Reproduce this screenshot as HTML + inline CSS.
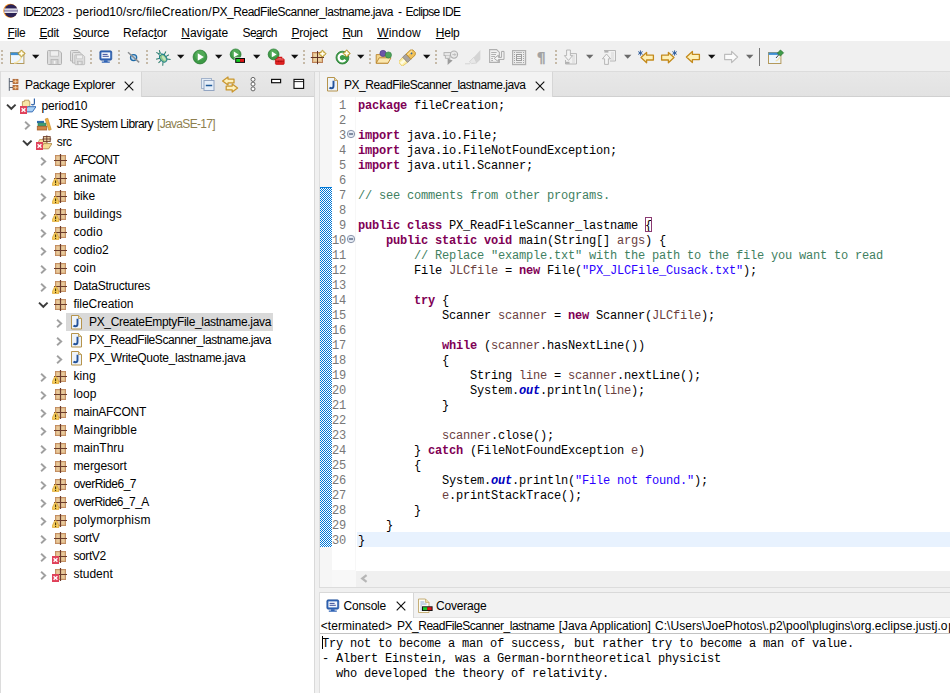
<!DOCTYPE html>
<html lang="en"><head><meta charset="utf-8"><title>IDE2023 - Eclipse IDE</title>
<style>
html,body{margin:0;padding:0}
body{width:950px;height:693px;position:relative;overflow:hidden;background:#fff;font-family:'Liberation Sans', sans-serif;font-size:12px;color:#000}
body>div,body>svg,body>span,body>pre{position:absolute;display:block}
body>span{white-space:pre;line-height:16px;height:16px}
pre{margin:0;font-family:'Liberation Mono', monospace;font-size:12px;line-height:15px;letter-spacing:-0.2012px}
.k{color:#7f0055;font-weight:bold} .s{color:#2a00ff} .c{color:#3f7f5f} .v{color:#6a3e3e} .f{color:#0000c0;font-weight:bold;font-style:italic}
u{text-decoration:underline;text-underline-offset:1px}
</style></head>
<body>
<div style="left:0px;top:41px;width:950px;height:31px;background:#f0f0f0;"></div>
<div style="left:0px;top:71px;width:950px;height:1px;background:#dcdcdc;"></div>
<div style="left:0px;top:72px;width:315px;height:621px;background:#fff;"></div>
<div style="left:0px;top:72px;width:314px;height:25px;background:linear-gradient(#e8e8e8,#e2e2e2);"></div>
<div style="left:0px;top:96px;width:314px;height:1px;background:#d0d0d0;"></div>
<div style="left:1px;top:71px;width:140px;height:26px;background:#f3f3f3;"></div>
<div style="left:1px;top:71px;width:140px;height:1px;background:#e2e2e2;"></div>
<div style="left:141px;top:72px;width:1px;height:25px;background:#d6d6d6;"></div>
<div style="left:0px;top:72px;width:1px;height:621px;background:#dcdcdc;"></div>
<div style="left:314px;top:72px;width:1px;height:621px;background:#d9d9d9;"></div>
<div style="left:315px;top:72px;width:4px;height:621px;background:#f0f0f0;"></div>
<div style="left:319px;top:72px;width:631px;height:515px;background:#fff;"></div>
<div style="left:319px;top:72px;width:631px;height:25px;background:linear-gradient(#e8e8e8,#e2e2e2);"></div>
<div style="left:319px;top:96px;width:631px;height:1px;background:#d0d0d0;"></div>
<div style="left:320px;top:71px;width:232px;height:26px;background:#f3f3f3;"></div>
<div style="left:320px;top:71px;width:232px;height:1px;background:#e2e2e2;"></div>
<div style="left:552px;top:72px;width:1px;height:25px;background:#d6d6d6;"></div>
<div style="left:319px;top:72px;width:1px;height:515px;background:#dedede;"></div>
<div style="left:320px;top:97px;width:12px;height:490px;background:#f6f6f6;"></div>
<div style="left:332px;top:570px;width:24px;height:17px;background:#f8f8f8;"></div>
<div style="left:356px;top:571px;width:594px;height:16px;background:#f0f0f0;"></div>
<div style="left:355px;top:97px;width:1px;height:473px;background:#f7f7f7;"></div>
<div style="left:319px;top:587px;width:631px;height:1px;background:#dcdcdc;"></div>
<div style="left:319px;top:588px;width:631px;height:4px;background:#f0f0f0;"></div>
<div style="left:320px;top:187px;width:12px;height:360px;background:#fff;background-image:conic-gradient(#0078d7 25%,#fff 0 50%,#0078d7 0 75%,#fff 0);background-size:2px 2px"></div>
<div style="left:320px;top:187px;width:12px;height:1px;background:#0078d7;"></div>
<div style="left:357px;top:532px;width:593px;height:15px;background:#e8f2fe;"></div>
<div style="left:319px;top:592px;width:631px;height:101px;background:#fff;"></div>
<div style="left:319px;top:592px;width:631px;height:26px;background:#f2f2f2;"></div>
<div style="left:319px;top:617px;width:631px;height:1px;background:#e4e4e4;"></div>
<div style="left:319px;top:592px;width:631px;height:1px;background:#d9d9d9;"></div>
<div style="left:320px;top:593px;width:93px;height:25px;background:#fff;"></div>
<div style="left:413px;top:593px;width:1px;height:25px;background:#d6d6d6;"></div>
<div style="left:319px;top:592px;width:1px;height:101px;background:#dedede;"></div>
<div style="left:320px;top:633px;width:630px;height:1px;background:#c2c2c2;"></div>
<span style="left:23px;top:4px;font-size:12px;letter-spacing:-0.900px;">IDE2023</span>
<span style="left:67.8px;top:4px;font-size:12px;letter-spacing:-0.200px;">-</span>
<span style="left:75.8px;top:4px;font-size:12px;letter-spacing:0.033px;">period10/src/</span>
<span style="left:145.9px;top:4px;font-size:12px;letter-spacing:0.136px;">fileCreation/</span>
<span style="left:212px;top:4px;font-size:12px;letter-spacing:-0.473px;">PX_ReadFileScanner_lastname.java</span>
<span style="left:398px;top:4px;font-size:12px;letter-spacing:-0.200px;">-</span>
<span style="left:405.5px;top:4px;font-size:12px;letter-spacing:-0.648px;">Eclipse IDE</span>
<span style="left:7.6px;top:24.5px;font-size:12px;letter-spacing:-0.440px;"><u>F</u>ile</span>
<span style="left:39.4px;top:24.5px;font-size:12px;letter-spacing:-0.326px;"><u>E</u>dit</span>
<span style="left:73px;top:24.5px;font-size:12px;letter-spacing:-0.308px;"><u>S</u>ource</span>
<span style="left:123px;top:24.5px;font-size:12px;letter-spacing:-0.147px;">Refac<u>t</u>or</span>
<span style="left:181.3px;top:24.5px;font-size:12px;letter-spacing:-0.059px;"><u>N</u>avigate</span>
<span style="left:242.6px;top:24.5px;font-size:12px;letter-spacing:-0.624px;">Se<u>a</u>rch</span>
<span style="left:291.4px;top:24.5px;font-size:12px;letter-spacing:-0.151px;"><u>P</u>roject</span>
<span style="left:342.4px;top:24.5px;font-size:12px;letter-spacing:-0.744px;"><u>R</u>un</span>
<span style="left:377.2px;top:24.5px;font-size:12px;letter-spacing:0.169px;"><u>W</u>indow</span>
<span style="left:435.8px;top:24.5px;font-size:12px;letter-spacing:-0.247px;"><u>H</u>elp</span>
<span style="left:25px;top:77px;font-size:12px;letter-spacing:-0.295px;">Package Explorer</span>
<span style="left:344px;top:77px;font-size:12px;letter-spacing:-0.457px;">PX_ReadFileScanner_lastname.java</span>
<span style="left:343.5px;top:597.5px;font-size:12px;letter-spacing:-0.219px;">Console</span>
<span style="left:436px;top:597.5px;font-size:12px;letter-spacing:-0.191px;">Coverage</span>
<span style="left:320.8px;top:618px;font-size:12px;letter-spacing:0.040px;">&lt;terminated&gt;</span>
<span style="left:397px;top:618px;font-size:12px;letter-spacing:-0.491px;">PX_ReadFileScanner_lastname</span>
<span style="left:558.8px;top:618px;font-size:12px;letter-spacing:-0.078px;">[Java Application]</span>
<span style="left:655px;top:618px;font-size:12px;letter-spacing:0.043px;">C:\Users\JoePhotos\.p2\pool\plugins\org.eclipse.justj.o</span>
<span style="left:948.2px;top:618px;font-size:12px;">penjdk.hotspot.jre.full</span>
<div style="left:66px;top:313px;width:207px;height:18px;background:#d9d9d9;"></div>
<span style="left:41.4px;top:98px;font-size:12px;letter-spacing:-0.090px;">period10</span>
<span style="left:56.8px;top:116px;font-size:12px;letter-spacing:-0.546px;">JRE System Library</span>
<span style="left:157px;top:116px;font-size:12px;letter-spacing:-0.670px;color:#8e7f4f;">[JavaSE-17]</span>
<span style="left:56.8px;top:134px;font-size:12px;letter-spacing:-0.367px;">src</span>
<span style="left:73.4px;top:152px;font-size:12px;letter-spacing:-0.624px;">AFCONT</span>
<span style="left:73.4px;top:170px;font-size:12px;letter-spacing:-0.015px;">animate</span>
<span style="left:73.4px;top:188px;font-size:12px;letter-spacing:-0.054px;">bike</span>
<span style="left:73.4px;top:206px;font-size:12px;letter-spacing:0.136px;">buildings</span>
<span style="left:73.4px;top:224px;font-size:12px;letter-spacing:0.122px;">codio</span>
<span style="left:73.4px;top:242px;font-size:12px;letter-spacing:0.004px;">codio2</span>
<span style="left:73.4px;top:260px;font-size:12px;letter-spacing:0.146px;">coin</span>
<span style="left:73.4px;top:278px;font-size:12px;letter-spacing:-0.246px;">DataStructures</span>
<span style="left:73.4px;top:296px;font-size:12px;letter-spacing:-0.050px;">fileCreation</span>
<span style="left:89px;top:314px;font-size:12px;letter-spacing:-0.336px;">PX_CreateEmptyFile_lastname.java</span>
<span style="left:89px;top:332px;font-size:12px;letter-spacing:-0.441px;">PX_ReadFileScanner_lastname.java</span>
<span style="left:89px;top:350px;font-size:12px;letter-spacing:-0.273px;">PX_WriteQuote_lastname.java</span>
<span style="left:73.4px;top:368px;font-size:12px;letter-spacing:0.071px;">king</span>
<span style="left:73.4px;top:386px;font-size:12px;letter-spacing:0.153px;">loop</span>
<span style="left:73.4px;top:404px;font-size:12px;letter-spacing:-0.274px;">mainAFCONT</span>
<span style="left:73.4px;top:422px;font-size:12px;letter-spacing:0.141px;">Maingribble</span>
<span style="left:73.4px;top:440px;font-size:12px;letter-spacing:-0.011px;">mainThru</span>
<span style="left:73.4px;top:458px;font-size:12px;letter-spacing:-0.081px;">mergesort</span>
<span style="left:73.4px;top:476px;font-size:12px;letter-spacing:-0.495px;">overRide6_7</span>
<span style="left:73.4px;top:494px;font-size:12px;letter-spacing:-0.572px;">overRide6_7_A</span>
<span style="left:73.4px;top:512px;font-size:12px;letter-spacing:0.216px;">polymorphism</span>
<span style="left:73.4px;top:530px;font-size:12px;letter-spacing:-0.403px;">sortV</span>
<span style="left:73.4px;top:548px;font-size:12px;letter-spacing:-0.381px;">sortV2</span>
<span style="left:73.4px;top:566px;font-size:12px;letter-spacing:0.004px;">student</span>
<pre style="left:358px;top:99px"><span class="k">package</span> fileCreation;

<span class="k">import</span> java.io.File;
<span class="k">import</span> java.io.FileNotFoundException;
<span class="k">import</span> java.util.Scanner;

<span class="c">// see comments from other programs.</span>

<span class="k">public</span> <span class="k">class</span> PX_ReadFileScanner_lastname {
    <span class="k">public</span> <span class="k">static</span> <span class="k">void</span> main(String[] <span class="v">args</span>) {
        <span class="c">// Replace &quot;example.txt&quot; with the path to the file you want to read</span>
        File <span class="v">JLCfile</span> = <span class="k">new</span> File(<span class="s">&quot;PX_JLCFile_Cusack.txt&quot;</span>);

        <span class="k">try</span> {
            Scanner <span class="v">scanner</span> = <span class="k">new</span> Scanner(<span class="v">JLCfile</span>);

            <span class="k">while</span> (<span class="v">scanner</span>.hasNextLine())
            {
                String <span class="v">line</span> = <span class="v">scanner</span>.nextLine();
                System.<span class="f">out</span>.println(<span class="v">line</span>);
            }

            <span class="v">scanner</span>.close();
        } <span class="k">catch</span> (FileNotFoundException <span class="v">e</span>)
        {
            System.<span class="f">out</span>.println(<span class="s">&quot;File not found.&quot;</span>);
            <span class="v">e</span>.printStackTrace();
        }
    }
}</pre>
<pre style="left:325px;top:99px;width:21px;text-align:right;color:#787878">1
2
3
4
5
6
7
8
9
10
11
12
13
14
15
16
17
18
19
20
21
22
23
24
25
26
27
28
29
30</pre>
<div style="left:645px;top:217px;width:7px;height:15px;background:transparent;border:1px solid #8a3a72;box-sizing:border-box"></div>
<pre style="left:322px;top:637px">Try not to become a man of success, but rather try to become a man of value.
- Albert Einstein, was a German-borntheoretical physicist
  who developed the theory of relativity.</pre>
<div style="left:322px;top:636px;width:1px;height:13px;background:#000;"></div>
<svg style="left:359px;top:573px" width="10" height="11" viewBox="0 0 10 11"><path d="M7.6 2.2 L3.2 5.5 L7.6 8.8" fill="none" stroke="#b6b6b6" stroke-width="2.2"/></svg>
<svg style="left:20px;top:98px" width="16" height="16" viewBox="0 0 16 16"><path d="M2.4 3.6 H4.4 V2.2 H9 V3.6 H9.8 V8.8 H2.4 Z" fill="#f8e6a6" stroke="#b8965a" stroke-width=".9"/><path d="M4.2 13.9 L7.6 8.7 H16 L12.4 13.9 Z" fill="#a9d1f6" stroke="#3b6fb6" stroke-width="1"/><path d="M14.4 .6 V5.2 Q14.4 6.8 12.9 6.8 Q11.9 6.8 11.4 6.1" fill="none" stroke="#2f62a8" stroke-width="1.2"/><rect x="0" y="8" width="7" height="8" fill="#e0415a"/><path d="M1.6 10.2 L5.4 13.8 M5.4 10.2 L1.6 13.8" stroke="#fff" stroke-width="1.4"/></svg>
<svg style="left:6.3px;top:97px" width="11" height="18" viewBox="0 0 11 18"><path d="M1 7.6 L5.3 11.8 L9.6 7.6" fill="none" stroke="#3c3c3c" stroke-width="1.9"/></svg>
<svg style="left:36px;top:116px" width="16" height="16" viewBox="0 0 16 16"><g transform="translate(0,1.3)"><rect x="1" y="3.6" width="7" height="2.2" fill="#2d6cab"/><rect x="2" y="5.8" width="8" height="3" fill="#3f9f73" stroke="#2b7a57" stroke-width=".6"/><rect x="1.3" y="9" width="9.4" height="3.7" fill="#cf8646" stroke="#a55e2a" stroke-width=".8"/><path d="M9.2 1.8 L11.8 1 L15.2 12.2 L12.8 13 Z" fill="#eeb244" stroke="#c98a2a" stroke-width=".7"/></g></svg>
<svg style="left:24.2px;top:115px" width="8" height="18" viewBox="0 0 8 18"><path d="M1.1 6.8 L5.2 10.5 L1.1 14.2" fill="none" stroke="#a0a0a0" stroke-width="1.9"/></svg>
<svg style="left:36px;top:134px" width="16" height="16" viewBox="0 0 16 16"><path d="M1.6 10 L3.6 5.6 H7.6 V4.6 H11 V10 Z" fill="#f7e3a3" stroke="#b8965a" stroke-width=".9"/><path d="M4.6 14.8 L7.8 9.6 H16 L12.6 14.8 Z" fill="#f6dc94" stroke="#b8965a" stroke-width="1"/><rect x="7.4" y="2.6" width="6.8" height="5" fill="#ecd4a6" stroke="#6b3b2a" stroke-width=".9"/><path d="M6.4 5H15.2M10.8 1.4V8.6" stroke="#6b3b2a" stroke-width=".9"/><rect x="0" y="8" width="7" height="8" fill="#e0415a"/><path d="M1.6 10.2 L5.4 13.8 M5.4 10.2 L1.6 13.8" stroke="#fff" stroke-width="1.4"/></svg>
<svg style="left:22.4px;top:133px" width="11" height="18" viewBox="0 0 11 18"><path d="M1 7.6 L5.3 11.8 L9.6 7.6" fill="none" stroke="#3c3c3c" stroke-width="1.9"/></svg>
<svg style="left:52px;top:152px" width="16" height="16" viewBox="0 0 16 16"><rect x="3.5" y="3.5" width="10" height="10" fill="#e8c99a" stroke="#b77d58"/><rect x="4" y="4" width="9" height="9" fill="none" stroke="#d9ae7c" stroke-width="1" opacity=".8"/><path d="M2 8.5H15M8.5 2V15" stroke="#6b3b2a" stroke-width="1.2"/></svg>
<svg style="left:40.2px;top:151px" width="8" height="18" viewBox="0 0 8 18"><path d="M1.1 6.8 L5.2 10.5 L1.1 14.2" fill="none" stroke="#a0a0a0" stroke-width="1.9"/></svg>
<svg style="left:52px;top:170px" width="16" height="16" viewBox="0 0 16 16"><rect x="3.5" y="3.5" width="10" height="10" fill="#e8c99a" stroke="#b77d58"/><rect x="4" y="4" width="9" height="9" fill="none" stroke="#d9ae7c" stroke-width="1" opacity=".8"/><path d="M2 8.5H15M8.5 2V15" stroke="#6b3b2a" stroke-width="1.2"/><path d="M3.6 8.5 Q4.4 8.5 4.9 9.5 L7 13.9 Q7.5 15.7 5.9 15.7 H1.3 Q-.3 15.7 .2 13.9 L2.3 9.5 Q2.8 8.5 3.6 8.5Z" fill="#f6cd5a" stroke="#d9a030" stroke-width=".7"/><path d="M3.6 10.4 V13.2 M3.6 14 V14.9" stroke="#4a3608" stroke-width="1.1"/></svg>
<svg style="left:40.2px;top:169px" width="8" height="18" viewBox="0 0 8 18"><path d="M1.1 6.8 L5.2 10.5 L1.1 14.2" fill="none" stroke="#a0a0a0" stroke-width="1.9"/></svg>
<svg style="left:52px;top:188px" width="16" height="16" viewBox="0 0 16 16"><rect x="3.5" y="3.5" width="10" height="10" fill="#e8c99a" stroke="#b77d58"/><rect x="4" y="4" width="9" height="9" fill="none" stroke="#d9ae7c" stroke-width="1" opacity=".8"/><path d="M2 8.5H15M8.5 2V15" stroke="#6b3b2a" stroke-width="1.2"/><path d="M3.6 8.5 Q4.4 8.5 4.9 9.5 L7 13.9 Q7.5 15.7 5.9 15.7 H1.3 Q-.3 15.7 .2 13.9 L2.3 9.5 Q2.8 8.5 3.6 8.5Z" fill="#f6cd5a" stroke="#d9a030" stroke-width=".7"/><path d="M3.6 10.4 V13.2 M3.6 14 V14.9" stroke="#4a3608" stroke-width="1.1"/></svg>
<svg style="left:40.2px;top:187px" width="8" height="18" viewBox="0 0 8 18"><path d="M1.1 6.8 L5.2 10.5 L1.1 14.2" fill="none" stroke="#a0a0a0" stroke-width="1.9"/></svg>
<svg style="left:52px;top:206px" width="16" height="16" viewBox="0 0 16 16"><rect x="3.5" y="3.5" width="10" height="10" fill="#e8c99a" stroke="#b77d58"/><rect x="4" y="4" width="9" height="9" fill="none" stroke="#d9ae7c" stroke-width="1" opacity=".8"/><path d="M2 8.5H15M8.5 2V15" stroke="#6b3b2a" stroke-width="1.2"/><path d="M3.6 8.5 Q4.4 8.5 4.9 9.5 L7 13.9 Q7.5 15.7 5.9 15.7 H1.3 Q-.3 15.7 .2 13.9 L2.3 9.5 Q2.8 8.5 3.6 8.5Z" fill="#f6cd5a" stroke="#d9a030" stroke-width=".7"/><path d="M3.6 10.4 V13.2 M3.6 14 V14.9" stroke="#4a3608" stroke-width="1.1"/></svg>
<svg style="left:40.2px;top:205px" width="8" height="18" viewBox="0 0 8 18"><path d="M1.1 6.8 L5.2 10.5 L1.1 14.2" fill="none" stroke="#a0a0a0" stroke-width="1.9"/></svg>
<svg style="left:52px;top:224px" width="16" height="16" viewBox="0 0 16 16"><rect x="3.5" y="3.5" width="10" height="10" fill="#e8c99a" stroke="#b77d58"/><rect x="4" y="4" width="9" height="9" fill="none" stroke="#d9ae7c" stroke-width="1" opacity=".8"/><path d="M2 8.5H15M8.5 2V15" stroke="#6b3b2a" stroke-width="1.2"/><path d="M3.6 8.5 Q4.4 8.5 4.9 9.5 L7 13.9 Q7.5 15.7 5.9 15.7 H1.3 Q-.3 15.7 .2 13.9 L2.3 9.5 Q2.8 8.5 3.6 8.5Z" fill="#f6cd5a" stroke="#d9a030" stroke-width=".7"/><path d="M3.6 10.4 V13.2 M3.6 14 V14.9" stroke="#4a3608" stroke-width="1.1"/></svg>
<svg style="left:40.2px;top:223px" width="8" height="18" viewBox="0 0 8 18"><path d="M1.1 6.8 L5.2 10.5 L1.1 14.2" fill="none" stroke="#a0a0a0" stroke-width="1.9"/></svg>
<svg style="left:52px;top:242px" width="16" height="16" viewBox="0 0 16 16"><rect x="3.5" y="3.5" width="10" height="10" fill="#e8c99a" stroke="#b77d58"/><rect x="4" y="4" width="9" height="9" fill="none" stroke="#d9ae7c" stroke-width="1" opacity=".8"/><path d="M2 8.5H15M8.5 2V15" stroke="#6b3b2a" stroke-width="1.2"/></svg>
<svg style="left:40.2px;top:241px" width="8" height="18" viewBox="0 0 8 18"><path d="M1.1 6.8 L5.2 10.5 L1.1 14.2" fill="none" stroke="#a0a0a0" stroke-width="1.9"/></svg>
<svg style="left:52px;top:260px" width="16" height="16" viewBox="0 0 16 16"><rect x="3.5" y="3.5" width="10" height="10" fill="#e8c99a" stroke="#b77d58"/><rect x="4" y="4" width="9" height="9" fill="none" stroke="#d9ae7c" stroke-width="1" opacity=".8"/><path d="M2 8.5H15M8.5 2V15" stroke="#6b3b2a" stroke-width="1.2"/></svg>
<svg style="left:40.2px;top:259px" width="8" height="18" viewBox="0 0 8 18"><path d="M1.1 6.8 L5.2 10.5 L1.1 14.2" fill="none" stroke="#a0a0a0" stroke-width="1.9"/></svg>
<svg style="left:52px;top:278px" width="16" height="16" viewBox="0 0 16 16"><rect x="3.5" y="3.5" width="10" height="10" fill="#e8c99a" stroke="#b77d58"/><rect x="4" y="4" width="9" height="9" fill="none" stroke="#d9ae7c" stroke-width="1" opacity=".8"/><path d="M2 8.5H15M8.5 2V15" stroke="#6b3b2a" stroke-width="1.2"/><path d="M3.6 8.5 Q4.4 8.5 4.9 9.5 L7 13.9 Q7.5 15.7 5.9 15.7 H1.3 Q-.3 15.7 .2 13.9 L2.3 9.5 Q2.8 8.5 3.6 8.5Z" fill="#f6cd5a" stroke="#d9a030" stroke-width=".7"/><path d="M3.6 10.4 V13.2 M3.6 14 V14.9" stroke="#4a3608" stroke-width="1.1"/></svg>
<svg style="left:40.2px;top:277px" width="8" height="18" viewBox="0 0 8 18"><path d="M1.1 6.8 L5.2 10.5 L1.1 14.2" fill="none" stroke="#a0a0a0" stroke-width="1.9"/></svg>
<svg style="left:52px;top:296px" width="16" height="16" viewBox="0 0 16 16"><rect x="3.5" y="3.5" width="10" height="10" fill="#e8c99a" stroke="#b77d58"/><rect x="4" y="4" width="9" height="9" fill="none" stroke="#d9ae7c" stroke-width="1" opacity=".8"/><path d="M2 8.5H15M8.5 2V15" stroke="#6b3b2a" stroke-width="1.2"/></svg>
<svg style="left:38.2px;top:295px" width="11" height="18" viewBox="0 0 11 18"><path d="M1 7.6 L5.3 11.8 L9.6 7.6" fill="none" stroke="#3c3c3c" stroke-width="1.9"/></svg>
<svg style="left:68px;top:314px" width="16" height="16" viewBox="0 0 16 16"><path d="M3.5 1.5 H10.5 L13.5 4.5 V15 H3.5 Z" fill="#eef4fb" stroke="#b6944c"/><path d="M10.5 1.5 V4.5 H13.5" fill="#e9d9a8" stroke="#b6944c" stroke-width=".8"/><path d="M9.5 4.8 V10 Q9.5 12.3 7.4 12.3 Q6.2 12.3 5.5 11.5" fill="none" stroke="#24539a" stroke-width="1.9"/></svg>
<svg style="left:56.2px;top:313px" width="8" height="18" viewBox="0 0 8 18"><path d="M1.1 6.8 L5.2 10.5 L1.1 14.2" fill="none" stroke="#a0a0a0" stroke-width="1.9"/></svg>
<svg style="left:68px;top:332px" width="16" height="16" viewBox="0 0 16 16"><path d="M3.5 1.5 H10.5 L13.5 4.5 V15 H3.5 Z" fill="#eef4fb" stroke="#b6944c"/><path d="M10.5 1.5 V4.5 H13.5" fill="#e9d9a8" stroke="#b6944c" stroke-width=".8"/><path d="M9.5 4.8 V10 Q9.5 12.3 7.4 12.3 Q6.2 12.3 5.5 11.5" fill="none" stroke="#24539a" stroke-width="1.9"/></svg>
<svg style="left:56.2px;top:331px" width="8" height="18" viewBox="0 0 8 18"><path d="M1.1 6.8 L5.2 10.5 L1.1 14.2" fill="none" stroke="#a0a0a0" stroke-width="1.9"/></svg>
<svg style="left:68px;top:350px" width="16" height="16" viewBox="0 0 16 16"><path d="M3.5 1.5 H10.5 L13.5 4.5 V15 H3.5 Z" fill="#eef4fb" stroke="#b6944c"/><path d="M10.5 1.5 V4.5 H13.5" fill="#e9d9a8" stroke="#b6944c" stroke-width=".8"/><path d="M9.5 4.8 V10 Q9.5 12.3 7.4 12.3 Q6.2 12.3 5.5 11.5" fill="none" stroke="#24539a" stroke-width="1.9"/></svg>
<svg style="left:56.2px;top:349px" width="8" height="18" viewBox="0 0 8 18"><path d="M1.1 6.8 L5.2 10.5 L1.1 14.2" fill="none" stroke="#a0a0a0" stroke-width="1.9"/></svg>
<svg style="left:52px;top:368px" width="16" height="16" viewBox="0 0 16 16"><rect x="3.5" y="3.5" width="10" height="10" fill="#e8c99a" stroke="#b77d58"/><rect x="4" y="4" width="9" height="9" fill="none" stroke="#d9ae7c" stroke-width="1" opacity=".8"/><path d="M2 8.5H15M8.5 2V15" stroke="#6b3b2a" stroke-width="1.2"/><path d="M3.6 8.5 Q4.4 8.5 4.9 9.5 L7 13.9 Q7.5 15.7 5.9 15.7 H1.3 Q-.3 15.7 .2 13.9 L2.3 9.5 Q2.8 8.5 3.6 8.5Z" fill="#f6cd5a" stroke="#d9a030" stroke-width=".7"/><path d="M3.6 10.4 V13.2 M3.6 14 V14.9" stroke="#4a3608" stroke-width="1.1"/></svg>
<svg style="left:40.2px;top:367px" width="8" height="18" viewBox="0 0 8 18"><path d="M1.1 6.8 L5.2 10.5 L1.1 14.2" fill="none" stroke="#a0a0a0" stroke-width="1.9"/></svg>
<svg style="left:52px;top:386px" width="16" height="16" viewBox="0 0 16 16"><rect x="3.5" y="3.5" width="10" height="10" fill="#e8c99a" stroke="#b77d58"/><rect x="4" y="4" width="9" height="9" fill="none" stroke="#d9ae7c" stroke-width="1" opacity=".8"/><path d="M2 8.5H15M8.5 2V15" stroke="#6b3b2a" stroke-width="1.2"/></svg>
<svg style="left:40.2px;top:385px" width="8" height="18" viewBox="0 0 8 18"><path d="M1.1 6.8 L5.2 10.5 L1.1 14.2" fill="none" stroke="#a0a0a0" stroke-width="1.9"/></svg>
<svg style="left:52px;top:404px" width="16" height="16" viewBox="0 0 16 16"><rect x="3.5" y="3.5" width="10" height="10" fill="#e8c99a" stroke="#b77d58"/><rect x="4" y="4" width="9" height="9" fill="none" stroke="#d9ae7c" stroke-width="1" opacity=".8"/><path d="M2 8.5H15M8.5 2V15" stroke="#6b3b2a" stroke-width="1.2"/><path d="M3.6 8.5 Q4.4 8.5 4.9 9.5 L7 13.9 Q7.5 15.7 5.9 15.7 H1.3 Q-.3 15.7 .2 13.9 L2.3 9.5 Q2.8 8.5 3.6 8.5Z" fill="#f6cd5a" stroke="#d9a030" stroke-width=".7"/><path d="M3.6 10.4 V13.2 M3.6 14 V14.9" stroke="#4a3608" stroke-width="1.1"/></svg>
<svg style="left:40.2px;top:403px" width="8" height="18" viewBox="0 0 8 18"><path d="M1.1 6.8 L5.2 10.5 L1.1 14.2" fill="none" stroke="#a0a0a0" stroke-width="1.9"/></svg>
<svg style="left:52px;top:422px" width="16" height="16" viewBox="0 0 16 16"><rect x="3.5" y="3.5" width="10" height="10" fill="#e8c99a" stroke="#b77d58"/><rect x="4" y="4" width="9" height="9" fill="none" stroke="#d9ae7c" stroke-width="1" opacity=".8"/><path d="M2 8.5H15M8.5 2V15" stroke="#6b3b2a" stroke-width="1.2"/></svg>
<svg style="left:40.2px;top:421px" width="8" height="18" viewBox="0 0 8 18"><path d="M1.1 6.8 L5.2 10.5 L1.1 14.2" fill="none" stroke="#a0a0a0" stroke-width="1.9"/></svg>
<svg style="left:52px;top:440px" width="16" height="16" viewBox="0 0 16 16"><rect x="3.5" y="3.5" width="10" height="10" fill="#e8c99a" stroke="#b77d58"/><rect x="4" y="4" width="9" height="9" fill="none" stroke="#d9ae7c" stroke-width="1" opacity=".8"/><path d="M2 8.5H15M8.5 2V15" stroke="#6b3b2a" stroke-width="1.2"/></svg>
<svg style="left:40.2px;top:439px" width="8" height="18" viewBox="0 0 8 18"><path d="M1.1 6.8 L5.2 10.5 L1.1 14.2" fill="none" stroke="#a0a0a0" stroke-width="1.9"/></svg>
<svg style="left:52px;top:458px" width="16" height="16" viewBox="0 0 16 16"><rect x="3.5" y="3.5" width="10" height="10" fill="#e8c99a" stroke="#b77d58"/><rect x="4" y="4" width="9" height="9" fill="none" stroke="#d9ae7c" stroke-width="1" opacity=".8"/><path d="M2 8.5H15M8.5 2V15" stroke="#6b3b2a" stroke-width="1.2"/></svg>
<svg style="left:40.2px;top:457px" width="8" height="18" viewBox="0 0 8 18"><path d="M1.1 6.8 L5.2 10.5 L1.1 14.2" fill="none" stroke="#a0a0a0" stroke-width="1.9"/></svg>
<svg style="left:52px;top:476px" width="16" height="16" viewBox="0 0 16 16"><rect x="3.5" y="3.5" width="10" height="10" fill="#e8c99a" stroke="#b77d58"/><rect x="4" y="4" width="9" height="9" fill="none" stroke="#d9ae7c" stroke-width="1" opacity=".8"/><path d="M2 8.5H15M8.5 2V15" stroke="#6b3b2a" stroke-width="1.2"/><path d="M3.6 8.5 Q4.4 8.5 4.9 9.5 L7 13.9 Q7.5 15.7 5.9 15.7 H1.3 Q-.3 15.7 .2 13.9 L2.3 9.5 Q2.8 8.5 3.6 8.5Z" fill="#f6cd5a" stroke="#d9a030" stroke-width=".7"/><path d="M3.6 10.4 V13.2 M3.6 14 V14.9" stroke="#4a3608" stroke-width="1.1"/></svg>
<svg style="left:40.2px;top:475px" width="8" height="18" viewBox="0 0 8 18"><path d="M1.1 6.8 L5.2 10.5 L1.1 14.2" fill="none" stroke="#a0a0a0" stroke-width="1.9"/></svg>
<svg style="left:52px;top:494px" width="16" height="16" viewBox="0 0 16 16"><rect x="3.5" y="3.5" width="10" height="10" fill="#e8c99a" stroke="#b77d58"/><rect x="4" y="4" width="9" height="9" fill="none" stroke="#d9ae7c" stroke-width="1" opacity=".8"/><path d="M2 8.5H15M8.5 2V15" stroke="#6b3b2a" stroke-width="1.2"/><path d="M3.6 8.5 Q4.4 8.5 4.9 9.5 L7 13.9 Q7.5 15.7 5.9 15.7 H1.3 Q-.3 15.7 .2 13.9 L2.3 9.5 Q2.8 8.5 3.6 8.5Z" fill="#f6cd5a" stroke="#d9a030" stroke-width=".7"/><path d="M3.6 10.4 V13.2 M3.6 14 V14.9" stroke="#4a3608" stroke-width="1.1"/></svg>
<svg style="left:40.2px;top:493px" width="8" height="18" viewBox="0 0 8 18"><path d="M1.1 6.8 L5.2 10.5 L1.1 14.2" fill="none" stroke="#a0a0a0" stroke-width="1.9"/></svg>
<svg style="left:52px;top:512px" width="16" height="16" viewBox="0 0 16 16"><rect x="3.5" y="3.5" width="10" height="10" fill="#e8c99a" stroke="#b77d58"/><rect x="4" y="4" width="9" height="9" fill="none" stroke="#d9ae7c" stroke-width="1" opacity=".8"/><path d="M2 8.5H15M8.5 2V15" stroke="#6b3b2a" stroke-width="1.2"/><path d="M3.6 8.5 Q4.4 8.5 4.9 9.5 L7 13.9 Q7.5 15.7 5.9 15.7 H1.3 Q-.3 15.7 .2 13.9 L2.3 9.5 Q2.8 8.5 3.6 8.5Z" fill="#f6cd5a" stroke="#d9a030" stroke-width=".7"/><path d="M3.6 10.4 V13.2 M3.6 14 V14.9" stroke="#4a3608" stroke-width="1.1"/></svg>
<svg style="left:40.2px;top:511px" width="8" height="18" viewBox="0 0 8 18"><path d="M1.1 6.8 L5.2 10.5 L1.1 14.2" fill="none" stroke="#a0a0a0" stroke-width="1.9"/></svg>
<svg style="left:52px;top:530px" width="16" height="16" viewBox="0 0 16 16"><rect x="3.5" y="3.5" width="10" height="10" fill="#e8c99a" stroke="#b77d58"/><rect x="4" y="4" width="9" height="9" fill="none" stroke="#d9ae7c" stroke-width="1" opacity=".8"/><path d="M2 8.5H15M8.5 2V15" stroke="#6b3b2a" stroke-width="1.2"/></svg>
<svg style="left:40.2px;top:529px" width="8" height="18" viewBox="0 0 8 18"><path d="M1.1 6.8 L5.2 10.5 L1.1 14.2" fill="none" stroke="#a0a0a0" stroke-width="1.9"/></svg>
<svg style="left:52px;top:548px" width="16" height="16" viewBox="0 0 16 16"><rect x="3.5" y="3.5" width="10" height="10" fill="#e8c99a" stroke="#b77d58"/><rect x="4" y="4" width="9" height="9" fill="none" stroke="#d9ae7c" stroke-width="1" opacity=".8"/><path d="M2 8.5H15M8.5 2V15" stroke="#6b3b2a" stroke-width="1.2"/><rect x="0" y="8" width="7" height="8" fill="#e0415a"/><path d="M1.6 10.2 L5.4 13.8 M5.4 10.2 L1.6 13.8" stroke="#fff" stroke-width="1.4"/></svg>
<svg style="left:40.2px;top:547px" width="8" height="18" viewBox="0 0 8 18"><path d="M1.1 6.8 L5.2 10.5 L1.1 14.2" fill="none" stroke="#a0a0a0" stroke-width="1.9"/></svg>
<svg style="left:52px;top:566px" width="16" height="16" viewBox="0 0 16 16"><rect x="3.5" y="3.5" width="10" height="10" fill="#e8c99a" stroke="#b77d58"/><rect x="4" y="4" width="9" height="9" fill="none" stroke="#d9ae7c" stroke-width="1" opacity=".8"/><path d="M2 8.5H15M8.5 2V15" stroke="#6b3b2a" stroke-width="1.2"/><rect x="0" y="8" width="7" height="8" fill="#e0415a"/><path d="M1.6 10.2 L5.4 13.8 M5.4 10.2 L1.6 13.8" stroke="#fff" stroke-width="1.4"/></svg>
<svg style="left:40.2px;top:565px" width="8" height="18" viewBox="0 0 8 18"><path d="M1.1 6.8 L5.2 10.5 L1.1 14.2" fill="none" stroke="#a0a0a0" stroke-width="1.9"/></svg>
<svg style="left:122.5px;top:79.5px" width="12" height="12" viewBox="0 0 12 12"><path d="M1.7 1.7 L10.3 10.3 M10.3 1.7 L1.7 10.3" stroke="#111" stroke-width="1.15"/></svg>
<svg style="left:533.5px;top:79.5px" width="12" height="12" viewBox="0 0 12 12"><path d="M1.7 1.7 L10.3 10.3 M10.3 1.7 L1.7 10.3" stroke="#111" stroke-width="1.15"/></svg>
<svg style="left:394.5px;top:600.4px" width="12" height="12" viewBox="0 0 12 12"><path d="M1.7 1.7 L10.3 10.3 M10.3 1.7 L1.7 10.3" stroke="#111" stroke-width="1.15"/></svg>
<svg style="left:8px;top:77px" width="12" height="15" viewBox="0 0 12 15"><path d="M1.3 1 V13.8 M1.3 4.5 H5 M1.3 10.5 H5" stroke="#5a6472" stroke-width="1" fill="none"/><rect x="5" y="2.3" width="5" height="4.3" fill="#cf8446" stroke="#a25a2a" stroke-width=".7"/><rect x="5" y="8.4" width="5" height="4.3" fill="#cf8446" stroke="#a25a2a" stroke-width=".7"/><path d="M5.4 4.45H9.6M7.5 2.7V6.2M5.4 10.55H9.6M7.5 8.8V12.3" stroke="#f3d6ae" stroke-width=".7"/></svg>
<svg style="left:324px;top:76px" width="16" height="16" viewBox="0 0 16 16"><path d="M3.5 1.5 H10.5 L13.5 4.5 V15 H3.5 Z" fill="#eef4fb" stroke="#b6944c"/><path d="M10.5 1.5 V4.5 H13.5" fill="#e9d9a8" stroke="#b6944c" stroke-width=".8"/><path d="M9.5 4.8 V10 Q9.5 12.3 7.4 12.3 Q6.2 12.3 5.5 11.5" fill="none" stroke="#24539a" stroke-width="1.9"/></svg>
<svg style="left:200px;top:77px" width="16" height="16" viewBox="0 0 16 16"><rect x="1.5" y="1.5" width="10" height="10" fill="#e3ecf6" stroke="#a3b3cb"/><rect x="4" y="3.5" width="10" height="10" fill="#e6eef8" stroke="#93a5c2"/><path d="M5.8 8.5 H12.2" stroke="#1f5a9a" stroke-width="1.5"/></svg>
<svg style="left:221px;top:76px" width="18" height="17" viewBox="0 0 18 17"><path d="M1.6 5 L7 1 V3.1 H13 V6.9 H7 V9 Z" fill="#fdf0bd" stroke="#c9962e" stroke-width="1.25" stroke-linejoin="round"/><path d="M16.6 12 L11.2 8 V10.1 H5.2 V13.9 H11.2 V16 Z" fill="#fdf0bd" stroke="#c9962e" stroke-width="1.25" stroke-linejoin="round"/></svg>
<svg style="left:249px;top:76px" width="8" height="17" viewBox="0 0 8 17"><circle cx="4" cy="3.4" r="2" fill="#fff" stroke="#5e5e5e" stroke-width=".95"/><circle cx="4" cy="8.1" r="2" fill="#fff" stroke="#5e5e5e" stroke-width=".95"/><circle cx="4" cy="12.9" r="2" fill="#fff" stroke="#5e5e5e" stroke-width=".95"/></svg>
<svg style="left:270px;top:77px" width="12" height="8" viewBox="0 0 12 8"><rect x="1.6" y="2.4" width="9" height="3.3" fill="#fff" stroke="#111" stroke-width="1.2"/></svg>
<svg style="left:292px;top:77px" width="14" height="14" viewBox="0 0 14 14"><rect x="2" y="2.4" width="9.6" height="9" fill="#fff" stroke="#111" stroke-width="1.15"/><path d="M2 4.6 H11.6" stroke="#111" stroke-width=".9"/></svg>
<svg style="left:1px;top:50px" width="2" height="14" viewBox="0 0 2 14"><rect x="0" y="0" width="2" height="2" fill="#c6baa8"/><rect x="0" y="4" width="2" height="2" fill="#c6baa8"/><rect x="0" y="8" width="2" height="2" fill="#c6baa8"/><rect x="0" y="12" width="2" height="2" fill="#c6baa8"/></svg>
<svg style="left:90px;top:50px" width="2" height="14" viewBox="0 0 2 14"><rect x="0" y="0" width="2" height="2" fill="#c6baa8"/><rect x="0" y="4" width="2" height="2" fill="#c6baa8"/><rect x="0" y="8" width="2" height="2" fill="#c6baa8"/><rect x="0" y="12" width="2" height="2" fill="#c6baa8"/></svg>
<svg style="left:118px;top:50px" width="2" height="14" viewBox="0 0 2 14"><rect x="0" y="0" width="2" height="2" fill="#c6baa8"/><rect x="0" y="4" width="2" height="2" fill="#c6baa8"/><rect x="0" y="8" width="2" height="2" fill="#c6baa8"/><rect x="0" y="12" width="2" height="2" fill="#c6baa8"/></svg>
<svg style="left:146px;top:50px" width="2" height="14" viewBox="0 0 2 14"><rect x="0" y="0" width="2" height="2" fill="#c6baa8"/><rect x="0" y="4" width="2" height="2" fill="#c6baa8"/><rect x="0" y="8" width="2" height="2" fill="#c6baa8"/><rect x="0" y="12" width="2" height="2" fill="#c6baa8"/></svg>
<svg style="left:303px;top:50px" width="2" height="14" viewBox="0 0 2 14"><rect x="0" y="0" width="2" height="2" fill="#c6baa8"/><rect x="0" y="4" width="2" height="2" fill="#c6baa8"/><rect x="0" y="8" width="2" height="2" fill="#c6baa8"/><rect x="0" y="12" width="2" height="2" fill="#c6baa8"/></svg>
<svg style="left:369px;top:50px" width="2" height="14" viewBox="0 0 2 14"><rect x="0" y="0" width="2" height="2" fill="#c6baa8"/><rect x="0" y="4" width="2" height="2" fill="#c6baa8"/><rect x="0" y="8" width="2" height="2" fill="#c6baa8"/><rect x="0" y="12" width="2" height="2" fill="#c6baa8"/></svg>
<svg style="left:435px;top:50px" width="2" height="14" viewBox="0 0 2 14"><rect x="0" y="0" width="2" height="2" fill="#c6baa8"/><rect x="0" y="4" width="2" height="2" fill="#c6baa8"/><rect x="0" y="8" width="2" height="2" fill="#c6baa8"/><rect x="0" y="12" width="2" height="2" fill="#c6baa8"/></svg>
<svg style="left:555px;top:50px" width="2" height="14" viewBox="0 0 2 14"><rect x="0" y="0" width="2" height="2" fill="#c6baa8"/><rect x="0" y="4" width="2" height="2" fill="#c6baa8"/><rect x="0" y="8" width="2" height="2" fill="#c6baa8"/><rect x="0" y="12" width="2" height="2" fill="#c6baa8"/></svg>
<svg style="left:31.8px;top:54px" width="8" height="6" viewBox="0 0 8 6"><path d="M0 .8 H7.4 L3.7 4.8 Z" fill="#111"/></svg>
<svg style="left:177px;top:54px" width="8" height="6" viewBox="0 0 8 6"><path d="M0 .8 H7.4 L3.7 4.8 Z" fill="#111"/></svg>
<svg style="left:215px;top:54px" width="8" height="6" viewBox="0 0 8 6"><path d="M0 .8 H7.4 L3.7 4.8 Z" fill="#111"/></svg>
<svg style="left:253px;top:54px" width="8" height="6" viewBox="0 0 8 6"><path d="M0 .8 H7.4 L3.7 4.8 Z" fill="#111"/></svg>
<svg style="left:291px;top:54px" width="8" height="6" viewBox="0 0 8 6"><path d="M0 .8 H7.4 L3.7 4.8 Z" fill="#111"/></svg>
<svg style="left:357px;top:54px" width="8" height="6" viewBox="0 0 8 6"><path d="M0 .8 H7.4 L3.7 4.8 Z" fill="#111"/></svg>
<svg style="left:423px;top:54px" width="8" height="6" viewBox="0 0 8 6"><path d="M0 .8 H7.4 L3.7 4.8 Z" fill="#111"/></svg>
<svg style="left:708px;top:54px" width="8" height="6" viewBox="0 0 8 6"><path d="M0 .8 H7.4 L3.7 4.8 Z" fill="#111"/></svg>
<svg style="left:586px;top:54px" width="8" height="6" viewBox="0 0 8 6"><path d="M0 .8 H7.4 L3.7 4.8 Z" fill="#6a6a6a"/></svg>
<svg style="left:624px;top:54px" width="8" height="6" viewBox="0 0 8 6"><path d="M0 .8 H7.4 L3.7 4.8 Z" fill="#6a6a6a"/></svg>
<svg style="left:746px;top:54px" width="8" height="6" viewBox="0 0 8 6"><path d="M0 .8 H7.4 L3.7 4.8 Z" fill="#6a6a6a"/></svg>
<svg style="left:9px;top:49px" width="18" height="17" viewBox="0 0 18 17"><rect x="1.5" y="3.5" width="13.4" height="11" fill="#eef6fd" stroke="#b49a5c"/><rect x="1.5" y="3.5" width="13.4" height="2.6" fill="#3e8fd3"/><path d="M5 14 Q10.6 13.4 12.4 8" stroke="#f6e6b0" stroke-width="1.6" fill="none"/><path d="M12.5 0.8999999999999999 L16.1 4.5 L12.5 8.1 L8.9 4.5 Z" fill="#d2b044" stroke="#ad8c24" stroke-width=".7" stroke-linejoin="round"/><path d="M12.5 2.2 V6.8 M10.2 4.5 H14.8" stroke="#fffae0" stroke-width="1.4"/><circle cx="12.5" cy="4.5" r="1.3" fill="#fffdf2"/></svg>
<svg style="left:47px;top:50px" width="16" height="16" viewBox="0 0 16 16"><path d="M.5 1.5 Q.5 .5 1.5 .5 H12 L14.5 3 V13.5 Q14.5 14.5 13.5 14.5 H1.5 Q.5 14.5 .5 13.5 Z" fill="#dedede" stroke="#b2b2b2"/><rect x="3.2" y=".8" width="8.3" height="5.4" fill="#efefef" stroke="#bcbcbc" stroke-width=".8"/><rect x="4" y="9.5" width="7" height="5" fill="#d2d2d2" stroke="#b4b4b4" stroke-width=".8"/><rect x="6.8" y="10.8" width="1.6" height="3" fill="#f4f4f4"/></svg>
<svg style="left:70px;top:50px" width="16" height="16" viewBox="0 0 16 16"><path d="M.5 1.5 Q.5 .5 1.5 .5 H8 L10 2.5 V11 H.5 Z" fill="#e2e2e2" stroke="#b8b8b8"/><path d="M2.5 3.5 Q2.5 2.5 3.5 2.5 H10 L12 4.5 V13 H2.5 Z" fill="#e2e2e2" stroke="#b8b8b8"/><g transform="translate(4.5,4.5) scale(.7)"><path d="M.5 1.5 Q.5 .5 1.5 .5 H12 L14.5 3 V13.5 Q14.5 14.5 13.5 14.5 H1.5 Q.5 14.5 .5 13.5 Z" fill="#dedede" stroke="#b2b2b2"/><rect x="3.2" y=".8" width="8.3" height="5.4" fill="#efefef" stroke="#bcbcbc" stroke-width=".8"/><rect x="4" y="9.5" width="7" height="5" fill="#d2d2d2" stroke="#b4b4b4" stroke-width=".8"/><rect x="6.8" y="10.8" width="1.6" height="3" fill="#f4f4f4"/></g></svg>
<svg style="left:99px;top:50px" width="14" height="14" viewBox="0 0 14 14"><rect x=".8" y=".8" width="12" height="9.4" rx="1.4" fill="#2f63b5" stroke="#244f96" stroke-width=".6"/><rect x="2.4" y="2.4" width="8.8" height="6" fill="#f3f7fc"/><path d="M3.6 4.4 H8.6 M3.6 6.3 H9.8" stroke="#3a4f9a" stroke-width="1"/><path d="M5 10.2 H8.6 V11.6 H10.8 V12.8 H2.8 V11.6 H5 Z" fill="#2f63b5"/></svg>
<svg style="left:127px;top:51px" width="14" height="13" viewBox="0 0 14 13"><circle cx="6.6" cy="6.6" r="3.1" fill="#bcdaf1" stroke="#1d6aa8" stroke-width="1.25"/><path d="M1 1.2 L12.2 11.4" stroke="#8c8f92" stroke-width="1.5"/></svg>
<svg style="left:154px;top:49px" width="18" height="18" viewBox="0 0 18 18"><g transform="translate(8.6 8.4) rotate(-38)"><g stroke="#2b7d6c" stroke-width="1" fill="none"><path d="M-2.6 -1 L-6.2 -2.6 M-3 1.4 L-6.6 1.8 M-2.4 3.8 L-5 6.6 M2.6 -1 L6.2 -2.6 M3 1.4 L6.6 1.8 M2.4 3.8 L5 6.6 M-.6 -4.8 L-1.9 -7.8 M.6 -4.8 L1.9 -7.8"/></g><ellipse cx="0" cy="1" rx="3" ry="4.3" fill="#8cc68a" stroke="#1f7f8c" stroke-width="1"/><ellipse cx=".5" cy="1.4" rx="1.3" ry="2.7" fill="#c6e6ba"/><circle cx="0" cy="-3.9" r="1.3" fill="#b4dca8" stroke="#1f7f8c" stroke-width=".8"/></g></svg>
<svg style="left:192px;top:49px" width="16" height="16" viewBox="0 0 16 16"><circle cx="8" cy="8" r="6.9" fill="#3d9a46" stroke="#2a7a34" stroke-width=".8"/><circle cx="8" cy="6.275" r="4.968" fill="#63b866" opacity=".55"/><path d="M5.723 4.205 L11.795 8 L5.723 11.795 Z" fill="#fff"/></svg>
<svg style="left:229px;top:48px" width="18" height="17" viewBox="0 0 18 17"><circle cx="6.6" cy="6.4" r="5.4" fill="#3d9a46" stroke="#2a7a34" stroke-width=".8"/><circle cx="6.6" cy="5.050000000000001" r="3.888" fill="#63b866" opacity=".55"/><path d="M4.818 3.4299999999999997 L9.57 6.4 L4.818 9.370000000000001 Z" fill="#fff"/><rect x="5.6" y="9.4" width="10.8" height="6" fill="#f4f4f4"/><rect x="6.2" y="10" width="9.8" height="4.9" fill="#0a0a0a"/><rect x="7.2" y="11" width="3.9" height="2.9" fill="#12c81e"/><rect x="11.1" y="11" width="3.9" height="2.9" fill="#e01616"/></svg>
<svg style="left:267px;top:48px" width="18" height="17" viewBox="0 0 18 17"><circle cx="6.6" cy="6.4" r="5.4" fill="#3d9a46" stroke="#2a7a34" stroke-width=".8"/><circle cx="6.6" cy="5.050000000000001" r="3.888" fill="#63b866" opacity=".55"/><path d="M4.818 3.4299999999999997 L9.57 6.4 L4.818 9.370000000000001 Z" fill="#fff"/><rect x="8.4" y="10.8" width="8.8" height="5.6" rx=".9" fill="#e22222" stroke="#c40f0f" stroke-width=".7"/><path d="M10.9 10.6 V9.3 H14.7 V10.6" fill="none" stroke="#d41414" stroke-width="1.2"/><path d="M8.6 13.2 H17 M11.6 12.4 V14.2 M14 12.4 V14.2" stroke="#9c0c0c" stroke-width=".7"/><path d="M9.2 11.8 H16.4" stroke="#f47a7a" stroke-width=".7"/></svg>
<svg style="left:310px;top:49px" width="18" height="17" viewBox="0 0 18 17"><rect x="2.5" y="3.5" width="10" height="10" fill="#ecd3a2" stroke="#bb8058"/><rect x="3.5" y="4.5" width="8" height="8" fill="none" stroke="#e2bd8a" stroke-width="1"/><path d="M.8 8.5H14M7.5 2V15.2" stroke="#5f3324" stroke-width="1"/><path d="M12.5 1.1 L16.1 4.7 L12.5 8.3 L8.9 4.7 Z" fill="#d2b044" stroke="#ad8c24" stroke-width=".7" stroke-linejoin="round"/><path d="M12.5 2.4000000000000004 V7.0 M10.2 4.7 H14.8" stroke="#fffae0" stroke-width="1.4"/><circle cx="12.5" cy="4.7" r="1.3" fill="#fffdf2"/></svg>
<svg style="left:335px;top:49px" width="18" height="17" viewBox="0 0 18 17"><circle cx="7.4" cy="8.6" r="6.4" fill="#3f9c48" stroke="#2a7a34" stroke-width=".8"/><path d="M10.3 6.4 A3.7 3.7 0 1 0 10.3 10.8" fill="none" stroke="#fff" stroke-width="2.3"/><path d="M11.7 0.8000000000000003 L15.299999999999999 4.4 L11.7 8.0 L8.1 4.4 Z" fill="#d2b044" stroke="#ad8c24" stroke-width=".7" stroke-linejoin="round"/><path d="M11.7 2.1000000000000005 V6.7 M9.399999999999999 4.4 H14.0" stroke="#fffae0" stroke-width="1.4"/><circle cx="11.7" cy="4.4" r="1.3" fill="#fffdf2"/></svg>
<svg style="left:375px;top:49px" width="18" height="17" viewBox="0 0 18 17"><path d="M1.2 14.2 V5.6 H6 L7.4 7 H13 V14.2 Z" fill="#f3d58c" stroke="#b9852f" stroke-width=".9"/><path d="M1.2 14.2 L4.2 8.8 H16 L13 14.2 Z" fill="#fbe7ae" stroke="#b9852f" stroke-width=".9"/><circle cx="8" cy="4.4" r="3.1" fill="#6b56a8" stroke="#4b3b86" stroke-width=".6"/><circle cx="13.4" cy="6" r="3.1" fill="#4ea35c" stroke="#2e7d3c" stroke-width=".6"/></svg>
<svg style="left:399px;top:49px" width="18" height="17" viewBox="0 0 18 17"><g transform="rotate(-43 8.5 8.5)"><path d="M-1.2 5.6 L5.2 5 V12 L-1.2 11.4 Z" fill="#fdf0a6" stroke="#e3bd4e" stroke-width=".7"/><path d="M-.6 8.5 H5" stroke="#fffbe4" stroke-width="2.6"/><rect x="5.2" y="4.9" width="4.6" height="7.2" fill="#aaa49e" stroke="#837b73" stroke-width=".7"/><path d="M9.8 5 H15.6 L17.6 6.6 V10.4 L15.6 12 H9.8 Z" fill="#f1c25a" stroke="#b98a2a" stroke-width=".8"/><path d="M10.4 6.6 H16.4" stroke="#fbe3a0" stroke-width="1.2"/><circle cx="14.2" cy="8.3" r=".9" fill="#2f62a8"/></g></svg>
<svg style="left:442px;top:49px" width="18" height="17" viewBox="0 0 18 17"><rect x="2" y="3.6" width="7.4" height="3" fill="#e8e8e8" stroke="#b0b0b0" stroke-width=".9"/><path d="M3.4 6.6 V9.4 H8 V6.6" fill="#e8e8e8" stroke="#b0b0b0" stroke-width=".9"/><path d="M5.6 9.4 V16 L10.6 11.4 Z" fill="#9c9c9c"/><circle cx="12" cy="5.6" r="3.6" fill="#e8e8e8" stroke="#b0b0b0" stroke-width="1.1"/><path d="M10.4 5.6 H13.6 M12.6 4.4 L13.8 5.6 L12.6 6.8" stroke="#b0b0b0" stroke-width=".8" fill="none"/></svg>
<svg style="left:464px;top:49px" width="18" height="17" viewBox="0 0 18 17"><path d="M9.8 8.2 L16.4 1 V10.4 L12.8 14 Z" fill="#d4d4d4"/><path d="M5.4 12.8 L9.8 8.2 L12.8 14 L7.4 14.6 Z" fill="#e8e8e8" stroke="#d0d0d0" stroke-width=".8"/><path d="M1 14.8 H6" stroke="#d0d0d0" stroke-width=".9"/></svg>
<svg style="left:488px;top:48px" width="18" height="17" viewBox="0 0 18 17"><path d="M1.6 1.6 H8.6 L11.4 4.4 V14.4 H1.6 Z" fill="#f1f1f1" stroke="#b0b0b0" stroke-width="1.1"/><path d="M3.2 4.5 H8.6 M3.2 6.5 H8 M3.2 8.5 H7 M3.2 10.5 H5 M3.2 12.5 H5" stroke="#b0b0b0" stroke-width="1"/><path d="M13.6 3.4 H16 V11.4 H10.4 V13.6 L6.2 10.4 L10.4 7.2 V9.4 H13.6 Z" fill="#f6f6f6" stroke="#a8a8a8" stroke-width="1" stroke-linejoin="round"/></svg>
<svg style="left:511px;top:49px" width="17" height="17" viewBox="0 0 17 17"><rect x="1.6" y="1.6" width="13" height="14" fill="#eeeeee" stroke="#b0b0b0" stroke-width="1.2"/><rect x="2.7" y="2.7" width="10.8" height="11.8" fill="none" stroke="#e2e2e2" stroke-width=".8"/><path d="M3.5 3 V14 M12.5 3 V14" stroke="#a6a6a6" stroke-width="1" stroke-dasharray="1 1"/><path d="M5 3.5 H11 M5 13.5 H11" stroke="#b4b4b4" stroke-width="1"/><rect x="5.5" y="5.5" width="5" height="6" fill="#f4f4f4" stroke="#9c9c9c" stroke-width="1"/><path d="M5.5 7.5 H10.5 M5.5 9.5 H10.5" stroke="#a8a8a8" stroke-width="1"/></svg>
<span style="left:536.8px;top:49px;font-size:14px;color:#a2a2a2;-webkit-text-stroke:.25px #a2a2a2;font-weight:bold;font-family:'DejaVu Sans','Liberation Sans',sans-serif;">¶</span>
<svg style="left:563px;top:49px" width="17" height="17" viewBox="0 0 17 17"><path d="M6.5 4.6 H13.5 V15 H2.5 V11" fill="#f1f1f1" stroke="#b0b0b0" stroke-width=".9"/><path d="M9 7 H12 M9 9 H12 M9 11 H12 M9 13 H12" stroke="#d0d0d0" stroke-width=".8"/><path d="M3.6 1 H7.4 V6.6 H9.6 L5.5 11.4 L1.4 6.6 H3.6 Z" fill="#f4f4f4" stroke="#b0b0b0" stroke-width=".9" stroke-linejoin="round"/><rect x="2.5" y="12.8" width="4" height="2" fill="#b0b0b0"/></svg>
<svg style="left:601px;top:49px" width="17" height="17" viewBox="0 0 17 17"><path d="M3 1.5 H14.5 V12 H9" fill="#f1f1f1" stroke="#b0b0b0" stroke-width=".9"/><rect x="3.4" y="1.6" width="4" height="2" fill="#b0b0b0"/><path d="M10 4 H13 M10 6 H13 M10 8 H13 M10 10 H13" stroke="#d0d0d0" stroke-width=".8"/><path d="M3.6 15.4 H7.4 V9.8 H9.6 L5.5 5 L1.4 9.8 H3.6 Z" fill="#f4f4f4" stroke="#b0b0b0" stroke-width=".9" stroke-linejoin="round"/></svg>
<svg style="left:637px;top:49px" width="18" height="16" viewBox="0 0 18 16"><path d="M4 8.6 L9.6 3.4 V6.2 H16.4 V11 H9.6 V13.8 Z" fill="#fdf0b8" stroke="#c48a1c" stroke-width="1.3" stroke-linejoin="round"/><path d="M3.4 1.4 V6.6 M1.1999999999999997 2.6 L5.6 5.4 M1.1999999999999997 5.4 L5.6 2.6" stroke="#2f5d9c" stroke-width="1"/></svg>
<svg style="left:660px;top:49px" width="18" height="16" viewBox="0 0 18 16"><path d="M14 8.6 L8.4 3.4 V6.2 H1.6 V11 H8.4 V13.8 Z" fill="#fdf0b8" stroke="#c48a1c" stroke-width="1.3" stroke-linejoin="round"/><path d="M14.6 1.4 V6.6 M12.399999999999999 2.6 L16.8 5.4 M12.399999999999999 5.4 L16.8 2.6" stroke="#2f5d9c" stroke-width="1"/></svg>
<svg style="left:685px;top:49px" width="16" height="16" viewBox="0 0 16 16"><path d="M1.4 8 L7.4 2.4 V5.4 H14.4 V10.6 H7.4 V13.6 Z" fill="#fdf0b8" stroke="#c48a1c" stroke-width="1.3" stroke-linejoin="round"/></svg>
<svg style="left:723px;top:49px" width="16" height="16" viewBox="0 0 16 16"><path d="M14.6 8 L8.6 2.4 V5.4 H1.6 V10.6 H8.6 V13.6 Z" fill="#fbfbfb" stroke="#bdbdbd" stroke-width="1.2" stroke-linejoin="round"/></svg>
<div style="left:759px;top:48px;width:1px;height:18px;background:#767676;"></div>
<svg style="left:767px;top:49px" width="18" height="16" viewBox="0 0 18 16"><rect x="1.5" y="3.5" width="12.4" height="11" fill="#eef6fd" stroke="#b49a5c"/><rect x="1.5" y="3.5" width="12.4" height="2.4" fill="#3e8fd3"/><path d="M8.6 12 Q12 11 13 7.6" stroke="#f4e4b0" stroke-width="1.3" fill="none"/><path d="M10.4 4.2 L13.4 1 L16.6 3.8 L13.4 7 Z" fill="#3f9c48" stroke="#256d2e" stroke-width=".7"/><path d="M11.6 6 L9 9" stroke="#444" stroke-width="1"/></svg>
<svg style="left:3px;top:3px" width="16" height="16" viewBox="0 0 16 16"><circle cx="7.3" cy="7.8" r="7" fill="#f7941e"/><circle cx="8" cy="7.8" r="6.6" fill="#2c2255"/><rect x="1.3" y="5.7" width="13.3" height="4" fill="#9d97ba"/><path d="M1.3 6.1 H14.6 M1.3 9.3 H14.6" stroke="#fff" stroke-width="1"/></svg>
<svg style="left:326px;top:599px" width="14" height="14" viewBox="0 0 14 14"><rect x=".8" y=".8" width="12" height="9.4" rx="1.4" fill="#2f63b5" stroke="#244f96" stroke-width=".6"/><rect x="2.4" y="2.4" width="8.8" height="6" fill="#f3f7fc"/><path d="M3.6 4.4 H8.6 M3.6 6.3 H9.8" stroke="#3a4f9a" stroke-width="1"/><path d="M5 10.2 H8.6 V11.6 H10.8 V12.8 H2.8 V11.6 H5 Z" fill="#2f63b5"/></svg>
<svg style="left:417px;top:597px" width="17" height="17" viewBox="0 0 17 17"><path d="M1.5 2 H8.5 L12 5.5 V15.5 H1.5 Z" fill="#fcfcf6" stroke="#bfa66a" stroke-width=".9"/><path d="M8.5 2 V5.5 H12" fill="#ead9a6" stroke="#bfa66a" stroke-width=".7"/><path d="M3.4 5 H7.4 M3.4 7 H9.6 M3.4 9 H5 M3.4 11 H5 M3.4 13 H8" stroke="#7f9fd0" stroke-width=".9"/><rect x="5" y="9.3" width="10.6" height="4.7" fill="#111"/><rect x="6" y="10.2" width="4.3" height="2.9" fill="#19c825"/><rect x="10.3" y="10.2" width="4.3" height="2.9" fill="#e01818"/></svg>
<svg style="left:345.7px;top:129.4px" width="10" height="10" viewBox="0 0 10 10"><circle cx="5" cy="5" r="3.7" fill="#e4eaf3" stroke="#808ba2" stroke-width=".9"/><path d="M2.9 5 H7.1" stroke="#2f3f5f" stroke-width="1.1"/></svg>
<svg style="left:345.7px;top:234.4px" width="10" height="10" viewBox="0 0 10 10"><circle cx="5" cy="5" r="3.7" fill="#e4eaf3" stroke="#808ba2" stroke-width=".9"/><path d="M2.9 5 H7.1" stroke="#2f3f5f" stroke-width="1.1"/></svg>
</body></html>
